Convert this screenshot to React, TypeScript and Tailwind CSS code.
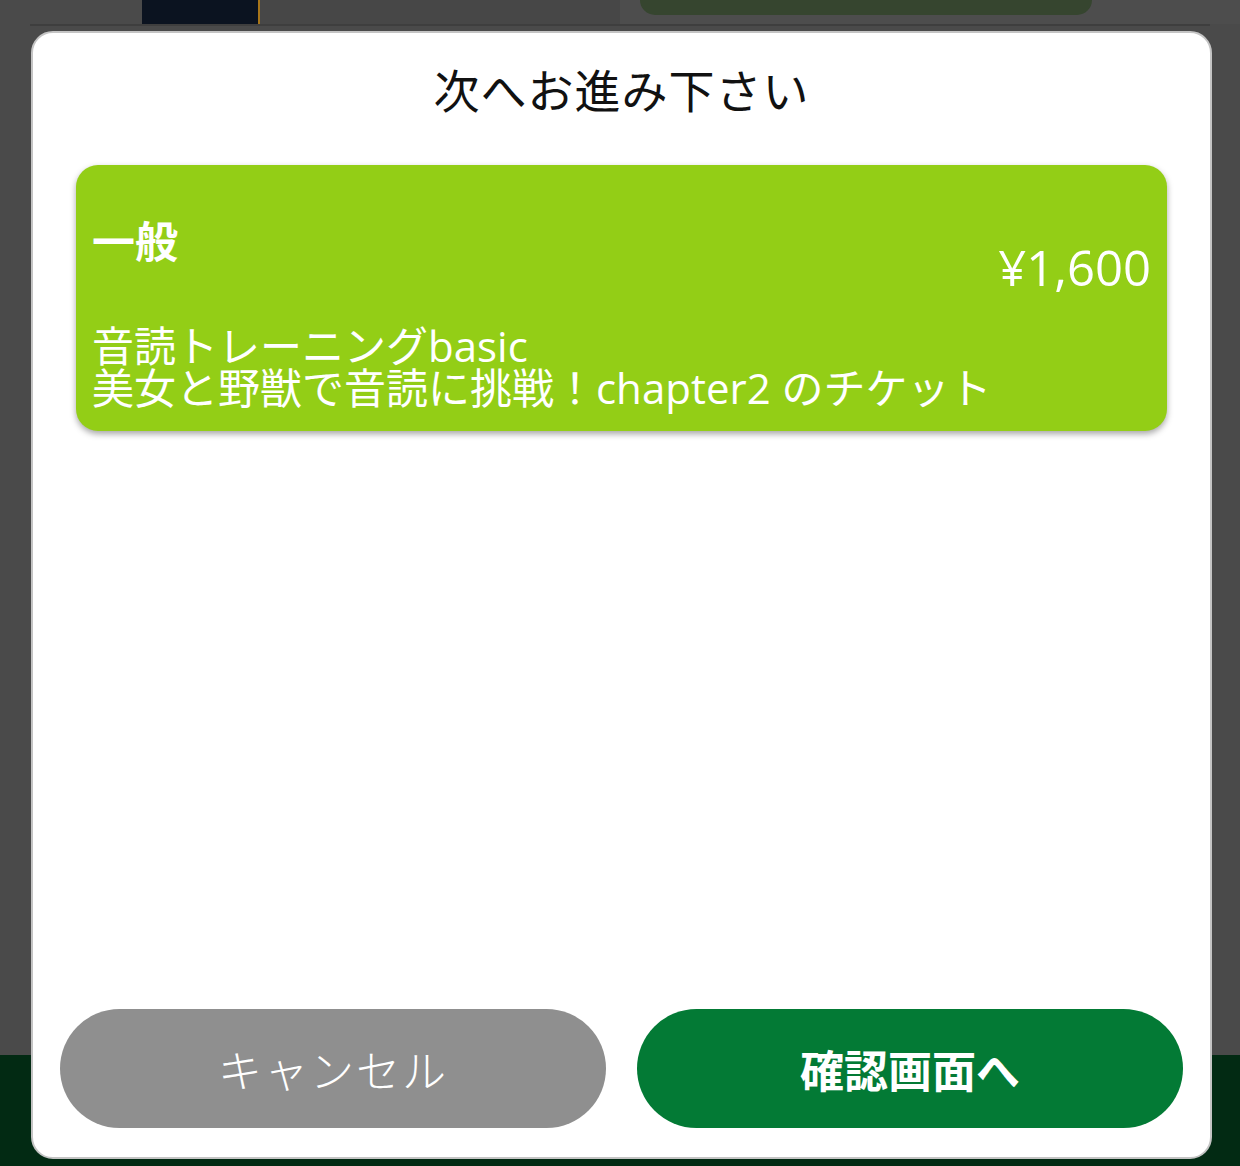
export default function App() {
  const font = { fontFamily: '"Noto Sans CJK JP", "Noto Sans", sans-serif' };
  const cardFont = { fontFamily: '"Open Sans", "Noto Sans CJK JP", sans-serif' };
  return (
    <div className="relative w-[1240px] h-[1166px] overflow-hidden bg-[#4a4a4a]" style={font}>
      {/* page behind the overlay */}
      <div className="flex h-[24px]">
        <div className="w-[142px]" />
        <div className="w-[118px] bg-[#0b1320] border-r-2 border-[#a8761a]" />
        <div className="w-[360px] bg-[#474747]" />
        <div className="flex-1 bg-[#4d4d4d] pl-[20px]">
          <div className="w-[452px] h-[15px] rounded-b-[24px] bg-[#36452f]" />
        </div>
      </div>
      <div className="mx-[30px] h-[2px] bg-[#3e3e3e]" />
      <div className="h-[1029px]" />
      <div className="h-[111px] bg-[#022a13]" />

      {/* modal */}
      <div className="absolute left-[31px] top-[31px] w-[1181px] h-[1128px] rounded-[22px] border-2 border-[#c4c4c4] bg-white flex flex-col">
        <h1 className="text-center text-[46px] leading-[46px] text-[#111] mt-[32px] tracking-[1px]">
          次へお進み下さい
        </h1>

        <div className="mx-[43px] mt-[54px] rounded-[22px] bg-[#93ce16] shadow-[0_3px_6px_rgba(0,0,0,0.35)] px-[16px] pt-[52px] pb-[22px] text-white">
          <div className="flex justify-between h-[108px]">
            <div className="text-[43px] leading-[44px] font-bold">一般</div>
            <div className="text-[49px] leading-[50px] mt-[25px]" style={cardFont}>
              ¥1,600
            </div>
          </div>
          <div className="text-[42px] leading-[42px] whitespace-nowrap" style={cardFont}>
            <div>音読トレーニングbasic</div>
            <div>美女と野獣で音読に挑戦！chapter2 のチケット</div>
          </div>
        </div>

        <div className="flex-1" />

        <div className="flex gap-[31px] px-[27px] pb-[29px]">
          <button className="flex-1 h-[119px] rounded-full bg-[#8f8f8f] text-white text-[44px] tracking-[2px] font-light">
            キャンセル
          </button>
          <button className="flex-1 h-[119px] rounded-full bg-[#037a35] text-white text-[44px] font-bold">
            確認画面へ
          </button>
        </div>
      </div>
    </div>
  );
}
